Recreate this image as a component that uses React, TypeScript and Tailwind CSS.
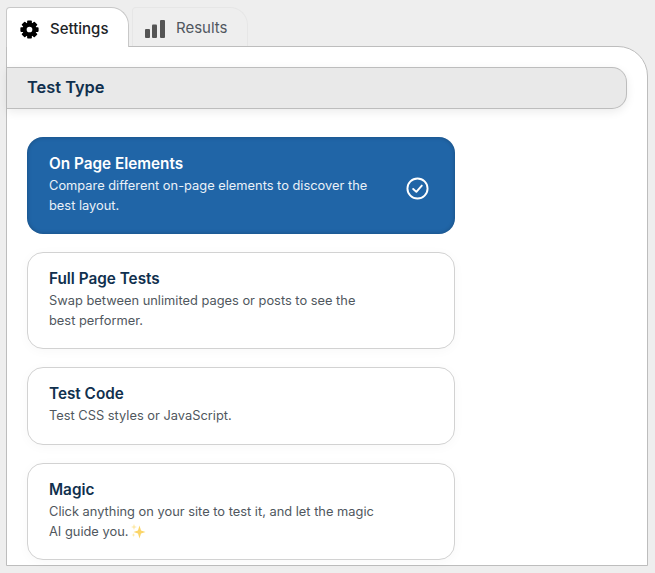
const cards = [
  { t: "On Page Elements", d: ["Compare different on-page elements to discover the", "best layout."], active: true, mb: "mb-[18px]", h: "h-[97px]" },
  { t: "Full Page Tests", d: ["Swap between unlimited pages or posts to see the", "best performer."], mb: "mb-[18px]", h: "h-[97px]" },
  { t: "Test Code", d: ["Test CSS styles or JavaScript."], mb: "mb-[18px]", h: "h-[78px]" },
  { t: "Magic", d: ["Click anything on your site to test it, and let the magic", "AI guide you."], sparkle: true, mb: "", h: "h-[97px]" },
];

function Sparkle() {
  return (
    <svg width="16" height="16" viewBox="0 0 16 16" className="inline-block ml-[2px] align-[-3px]">
      <path d="M9.5 2.5 L11 7.5 L15.5 9 L11 10.5 L9.5 15.5 L8 10.5 L3.5 9 L8 7.5 Z" fill="#fbd568" />
      <path d="M4 1 L4.8 3.2 L7 4 L4.8 4.8 L4 7 L3.2 4.8 L1 4 L3.2 3.2 Z" fill="#fde9a8" />
      <path d="M3.5 10 L4 11.5 L5.5 12 L4 12.5 L3.5 14 L3 12.5 L1.5 12 L3 11.5 Z" fill="#fde9a8" />
    </svg>
  );
}

function Gear() {
  const teeth = [0, 45, 90, 135, 180, 225, 270, 315];
  return (
    <svg width="19" height="19" viewBox="0 0 24 24" className="shrink-0">
      {teeth.map((a) => (
        <rect key={a} x="9" y="0.5" width="6" height="5" rx="1" fill="#000" transform={`rotate(${a} 12 12)`} />
      ))}
      <circle cx="12" cy="12" r="6.2" fill="none" stroke="#000" strokeWidth="5.2" />
    </svg>
  );
}

function Bars() {
  return (
    <svg width="20" height="18" viewBox="0 0 20 18" className="shrink-0" fill="#555">
      <rect x="0" y="9" width="5" height="9" rx="1" />
      <rect x="7" y="4.5" width="5" height="13.5" rx="1" />
      <rect x="15" y="0" width="5" height="18" rx="1" />
    </svg>
  );
}

export default function App() {
  return (
    <div className="w-[655px] h-[573px] overflow-hidden bg-[#eeeeee] pt-[7px] pl-[6px] pr-[7px] font-['Inter','Liberation_Sans',sans-serif]">
      <div className="flex h-[39px] relative z-10">
        <div className="w-[123px] h-[40px] bg-white border-l border-t border-r border-[#c8c8c8] rounded-tr-[18px] rounded-tl-[4px] flex items-center pt-[3px] pl-[13px] gap-[11px] text-[15px] font-medium text-[#1d2327]">
          <Gear />
          <span>Settings</span>
        </div>
        <div className="ml-[3px] w-[116px] h-[39px] border-l border-t border-r border-[#e6e6e6] rounded-tr-[18px] rounded-tl-[4px] flex items-center pt-[3px] pl-[12px] gap-[11px] text-[15px] text-[#50575e]">
          <Bars />
          <span>Results</span>
        </div>
      </div>
      <div className="w-[642px] h-[520px] bg-white border border-[#bdbdbd] rounded-tr-[30px] pt-[20px]">
        <div className="w-[620px] h-[42px] bg-[#e9e9e9] border-t border-b border-r border-[#bdbdbd] rounded-r-[15px] shadow-[0_3px_10px_rgba(0,0,0,0.08)] flex items-center pb-[2px] pl-[20px] text-[16.4px] font-semibold text-[#10304e]">
          Test Type
        </div>
        <div className="pt-[28px] pl-[20px] flex flex-col w-[448px]">
          {cards.map((c) => (
            <div
              key={c.t}
              className={`${c.h} ${c.mb} w-[428px] shrink-0 rounded-[16px] flex flex-col relative ${
                c.active
                  ? "pl-[22px] pt-[16px] bg-[#2065a7] text-white shadow-[inset_0_0_4px_rgba(0,0,0,0.25)]"
                  : "pl-[21px] pt-[15px] bg-white border border-[#d2d2d2] shadow-[0_2px_12px_rgba(0,0,0,0.03)]"
              }`}
            >
              <div className={`text-[15.3px] leading-[22px] font-semibold mb-[0.5px] ${c.active ? "text-white" : "text-[#10304e]"}`}>{c.t}</div>
              {c.d.map((line, i) => (
                <div key={i} className={`text-[12.85px] leading-[20.5px] ${c.active ? "text-[#eaf1f8]" : "text-[#50575e]"}`}>
                  {line}
                  {c.sparkle && i === 1 ? <Sparkle /> : null}
                </div>
              ))}
              {c.active ? (
                <svg width="23" height="23" viewBox="0 0 24 24" fill="none" stroke="white" strokeWidth="2" strokeLinecap="round" strokeLinejoin="round" className="absolute left-[378.5px] top-[40px]">
                  <circle cx="12" cy="12" r="10.5" />
                  <path d="M7.5 12.5 L10.8 15.5 L16.5 9" />
                </svg>
              ) : null}
            </div>
          ))}
        </div>
      </div>
    </div>
  );
}
